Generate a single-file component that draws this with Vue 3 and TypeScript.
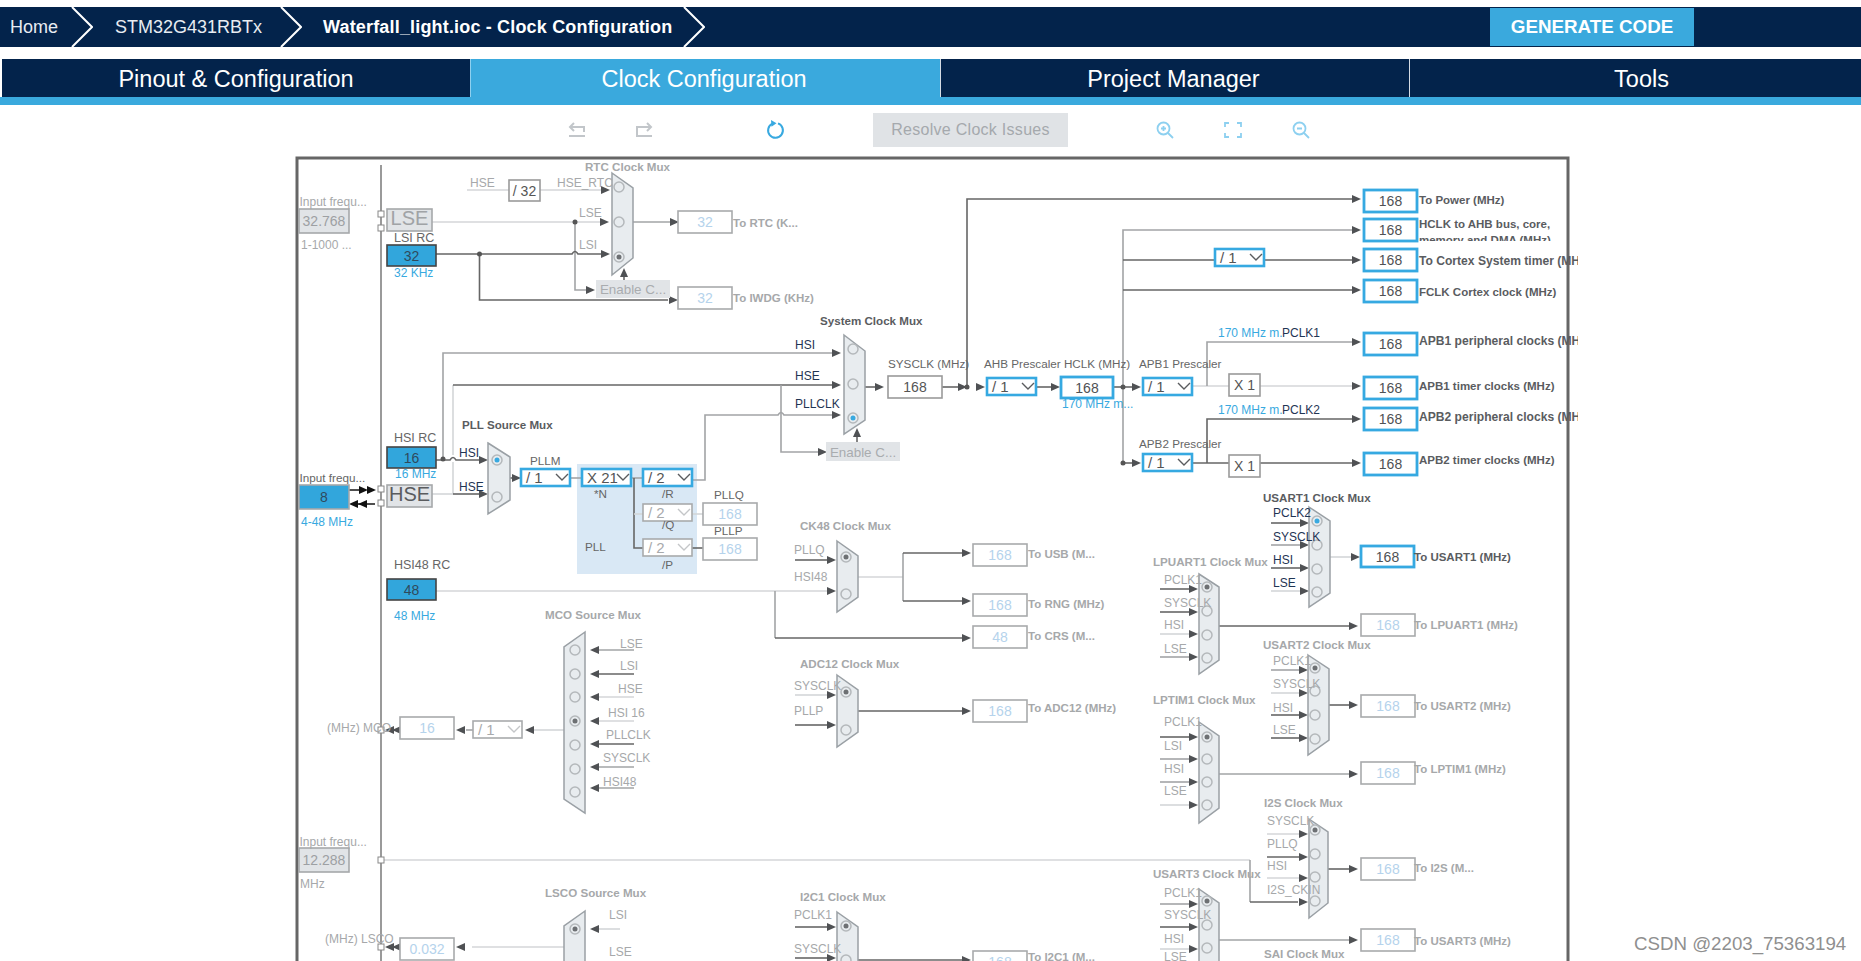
<template>
  <div class="page">
    <div class="crumbs">
      <div class="crumb home">Home</div>
      <svg class="chev" width="22" height="40" viewBox="0 0 22 40"><path d="M1 0 L21 20 L1 40" /></svg>
      <div class="crumb part">STM32G431RBTx</div>
      <svg class="chev" width="22" height="40" viewBox="0 0 22 40"><path d="M1 0 L21 20 L1 40" /></svg>
      <div class="crumb file">Waterfall_light.ioc - Clock Configuration</div>
      <svg class="chev" width="22" height="40" viewBox="0 0 22 40"><path d="M1 0 L21 20 L1 40" /></svg>
      <button class="generate">GENERATE CODE</button>
    </div>

    <div class="tabs">
      <div v-for="t in tabs" :key="t.name" class="tab" :class="{ active: t.active }">{{ t.name }}</div>
    </div>

    <div class="toolbar">
      <svg class="ic undo" width="18" height="16" viewBox="0 0 18 16"><path d="M6 1 L2 5 L6 9 M2 5 H16 V10 M1 14 H17" /></svg>
      <svg class="ic redo" width="18" height="16" viewBox="0 0 18 16"><path d="M12 1 L16 5 L12 9 M16 5 H2 V14 H17" /></svg>
      <svg class="ic refresh" width="20" height="20" viewBox="0 0 20 20"><path d="M7.5 3.6 A7.4 7.4 0 1 0 13 3.4" /><path class="head" d="M6 0 L11.5 3.2 L6.5 6.8 Z" /></svg>
      <button class="resolve">Resolve Clock Issues</button>
      <svg class="ic zoom zin" width="18" height="18" viewBox="0 0 18 18"><circle cx="7.5" cy="7.5" r="6" /><path d="M12 12 L17 17 M5 7.5 H10 M7.5 5 V10" /></svg>
      <svg class="ic zoom full" width="18" height="16" viewBox="0 0 18 16"><path d="M1 5 V1 H5 M13 1 H17 V5 M17 11 V15 H13 M5 15 H1 V11" /></svg>
      <svg class="ic zoom zout" width="18" height="18" viewBox="0 0 18 18"><circle cx="7.5" cy="7.5" r="6" /><path d="M12 12 L17 17 M5 7.5 H10" /></svg>
    </div>

    <div class="canvas">
      <svg class="diagram" width="1578" height="811" viewBox="0 150 1578 811">
        <defs>
          <clipPath id="hclk-clip"><rect x="1418" y="220" width="160" height="21" /></clipPath>
        </defs>
        <rect x="297" y="158" width="1271" height="830" class="frame" />
        <line x1="381" y1="165" x2="381" y2="961" class="rail" />

        <rect x="577" y="464" width="120" height="110" class="pll-block" />

        <path v-for="(w, i) in wires" :key="'w' + i" :d="w.d" class="wire" :class="w.tone" />
        <polygon v-for="(a, i) in arrows" :key="'a' + i" :points="a" class="arrow" />
        <polygon v-for="(a, i) in blackArrows" :key="'k' + i" :points="a" class="arrow-black" />
        <circle v-for="(d, i) in dots" :key="'d' + i" :cx="d[0]" :cy="d[1]" r="2.5" class="dot" />

        <g v-for="(m, i) in muxes" :key="'m' + i">
          <polygon :points="m.pts" class="mux" />
          <g v-for="(r, j) in m.radios" :key="j">
            <circle :cx="m.x" :cy="r" r="5" class="radio" />
            <circle v-if="m.sel === j" :cx="m.x" :cy="r" r="2.5" :class="m.blue ? 'pick-blue' : 'pick'" />
          </g>
        </g>

        <g v-for="(p, i) in pins" :key="'p' + i">
          <rect :x="p[0] - 3" :y="p[1] - 3" width="6" height="6" class="pin" />
        </g>

        <g v-for="(b, i) in boxes" :key="'b' + i">
          <rect :x="b.x" :y="b.y" :width="b.w" :height="b.h" class="box" :class="b.kind" />
          <text :x="b.x + b.w / 2" :y="b.y + b.h / 2 + 5" text-anchor="middle" class="box-t" :class="b.kind + '-t'">{{ b.t }}</text>
        </g>

        <g v-for="(d, i) in drops" :key="'s' + i">
          <rect :x="d.x" :y="d.y" width="49" height="17" class="box" :class="d.on ? 'sel' : 'sel-off'" />
          <text :x="d.x + 5" :y="d.y + 14" class="drop-t" :class="{ 'drop-off': !d.on }">{{ d.t }}</text>
          <path :d="`M${d.x + 35} ${d.y + 5} l6 6 l6 -6`" class="drop-c" :class="{ 'drop-c-off': !d.on }" />
        </g>

        <text v-for="(l, i) in labels" :key="'l' + i" :x="l[0]" :y="l[1]" class="lb" :class="l[3]">{{ l[2] }}</text>

        <g clip-path="url(#hclk-clip)">
          <text x="1419" y="228" class="lb out">HCLK to AHB bus, core,</text>
          <text x="1419" y="244" class="lb out">memory and DMA (MHz)</text>
        </g>
      </svg>
      <div class="mark">CSDN @2203_75363194</div>
    </div>
  </div>
</template>

<script setup lang="ts">
type Box = { x: number; y: number; w: number; h: number; t: string; kind: string }
type Drop = { x: number; y: number; t: string; on: boolean }
type Wire = { d: string; tone: string }
type Mux = { pts: string; x: number; radios: number[]; sel: number; blue?: boolean }

const tabs = [
  { name: 'Pinout & Configuration', active: false },
  { name: 'Clock Configuration', active: true },
  { name: 'Project Manager', active: false },
  { name: 'Tools', active: false },
]

// arrow tip at x,y
function ar(x: number, y: number, dir = 'r'): string {
  if (dir === 'r') return `${x},${y} ${x - 9},${y - 4} ${x - 9},${y + 4}`
  if (dir === 'l') return `${x},${y} ${x + 9},${y - 4} ${x + 9},${y + 4}`
  return `${x},${y} ${x - 4},${y + 9} ${x + 4},${y + 9}`
}

function w(d: string, tone = 'mid'): Wire {
  return { d, tone }
}

// all of the output boxes with the same width
const out = (y: number, t = '168'): Box => ({ x: 1364, y, w: 53, h: 22, t, kind: 'blue' })
const off = (x: number, y: number, t = '168'): Box => ({ x, y, w: 54, h: 22, t, kind: 'off' })
const rc = (y: number, t: string): Box => ({ x: 387, y, w: 49, h: 21, t, kind: 'rc' })

const boxes: Box[] = [
  { x: 299, y: 209, w: 50, h: 24, t: '32.768', kind: 'grey' },
  { x: 387, y: 209, w: 45, h: 22, t: 'LSE', kind: 'grey-big' },
  rc(245, '32'),
  { x: 509, y: 180, w: 31, h: 21, t: '/ 32', kind: 'plain' },
  off(678, 211, '32'),
  off(678, 287, '32'),
  { x: 596, y: 280, w: 74, h: 18, t: 'Enable C...', kind: 'fill' },
  { x: 826, y: 442, w: 74, h: 19, t: 'Enable C...', kind: 'fill' },
  rc(447, '16'),
  { x: 299, y: 485, w: 50, h: 24, t: '8', kind: 'rc-in' },
  { x: 387, y: 485, w: 45, h: 22, t: 'HSE', kind: 'dark-big' },
  rc(579, '48'),
  { x: 888, y: 376, w: 54, h: 22, t: '168', kind: 'plain' },
  { x: 1061, y: 377, w: 52, h: 21, t: '168', kind: 'blue' },
  { x: 1229, y: 374, w: 31, h: 22, t: 'X 1', kind: 'plain' },
  { x: 1229, y: 455, w: 31, h: 22, t: 'X 1', kind: 'plain' },
  out(190), out(219), out(249), out(280), out(333), out(377), out(408), out(453),
  off(703, 503), off(703, 538),
  off(973, 544), off(973, 594), off(973, 626, '48'), off(973, 700),
  { x: 1361, y: 546, w: 53, h: 21, t: '168', kind: 'blue' },
  off(1361, 614), off(1361, 695), off(1361, 762), off(1361, 858), off(1361, 929),
  off(400, 717, '16'),
  { x: 299, y: 848, w: 50, h: 24, t: '12.288', kind: 'grey' },
  off(400, 938, '0.032'),
  off(973, 951),
]

const drops: Drop[] = [
  { x: 987, y: 378, t: '/ 1', on: true },
  { x: 1143, y: 378, t: '/ 1', on: true },
  { x: 1143, y: 454, t: '/ 1', on: true },
  { x: 1215, y: 249, t: '/ 1', on: true },
  { x: 521, y: 469, t: '/ 1', on: true },
  { x: 582, y: 469, t: 'X 21', on: true },
  { x: 643, y: 469, t: '/ 2', on: true },
  { x: 643, y: 504, t: '/ 2', on: false },
  { x: 643, y: 539, t: '/ 2', on: false },
  { x: 473, y: 721, t: '/ 1', on: false },
]

const wires: Wire[] = [
  // RTC
  w('M467 190 H509', 'light'), w('M540 190 H602', 'light'),
  w('M432 222 H602', 'light'), w('M575 222 V290 H586', 'mid'),
  w('M436 254 H572 q3 -5 6 0 H602', 'dark'), w('M479.5 254 V300 H668', 'dark'),
  w('M633 222 H670', 'mid'), w('M624 280 V274', 'dark'),
  // system clock
  w('M443 459 V353 H832', 'mid'), w('M453 494 V462', 'light'),
  w('M453 455 V385', 'light'), w('M453 385 H832', 'dark'), w('M781 385 V452 H818', 'mid'),
  w('M692 480 H705 V415 H778 q3 -5 6 0 H832', 'mid'),
  w('M857 442 V436', 'dark'),
  w('M865 387 H876', 'dark'), w('M942 387 H958', 'dark'),
  w('M967 387 V199 H1352', 'dark'),
  w('M1036 387 H1052', 'dark'),
  w('M1113 387 H1132', 'dark'),
  w('M1123 463 V230 H1352', 'mid'),
  w('M1123 260 H1215', 'dark'), w('M1264 260 H1352', 'dark'),
  w('M1123 290 H1352', 'dark'),
  w('M1192 386 H1229', 'light'), w('M1207 386 V342 H1352', 'mid'), w('M1260 386 H1352', 'light'),
  w('M1123 463 H1132', 'dark'), w('M1192 463 H1229', 'dark'), w('M1207 463 V419 H1352', 'dark'),
  w('M1260 463 H1352', 'dark'),
  // pll
  w('M436 460 H450 q3 -5 6 0 H480', 'dark'), w('M432 494 H453', 'light'), w('M453 494 H480', 'dark'),
  w('M349 490 H364', 'black'), w('M358 504 H375', 'black'),
  w('M510 478 H512', 'dark'), w('M569 478 H582', 'mid'),
  w('M631 478 H643', 'mid'), w('M634 478 V548 H643', 'dark'), w('M634 514 H643', 'light'),
  w('M692 514 H703', 'light'), w('M692 548 H703', 'dark'),
  // 48 MHz and CK48
  w('M436 591 H827', 'light'), w('M775 591 V638', 'mid'), w('M775 638 H962', 'dark'),
  w('M795 560 H827', 'dark'), w('M858 577 H903', 'light'), w('M903 553 V601', 'mid'),
  w('M903 553 H962', 'dark'), w('M903 601 H962', 'dark'),
  // ADC12
  w('M795 695 H827', 'light'), w('M795 725 H827', 'dark'), w('M858 711 H962', 'dark'),
  // I2C1
  w('M795 927 H827', 'dark'), w('M795 958 H827', 'dark'), w('M858 960 H962', 'dark'),
  // MCO
  w('M599 650 H634', 'mid'), w('M599 674 H634', 'dark'), w('M599 697 H634', 'light'),
  w('M599 721 H634', 'light'), w('M599 744 H634', 'dark'), w('M599 767 H634', 'mid'),
  w('M599 788 H634', 'mid'),
  w('M534 730 H564', 'light'), w('M466 730 H473', 'mid'), w('M396 730 H400', 'dark'),
  // 12.288 MHz
  w('M384 860 H1250', 'light'), w('M1250 860 V902', 'mid'), w('M1250 902 H1298', 'dark'),
  // LSCO
  w('M599 929 H620', 'light'), w('M472 947 H564', 'light'), w('M396 947 H400', 'dark'),
  // USART1
  w('M1271 523 H1300', 'dark'), w('M1271 545 H1300', 'mid'), w('M1271 568 H1300', 'dark'),
  w('M1271 591 H1300', 'light'), w('M1330 557 H1352', 'light'),
  // LPUART1
  w('M1160 589 H1190', 'dark'), w('M1160 612 H1190', 'dark'), w('M1160 634 H1190', 'light'),
  w('M1160 657 H1190', 'mid'), w('M1219 626 H1350', 'dark'),
  // USART2
  w('M1271 670 H1300', 'mid'), w('M1271 693 H1300', 'light'), w('M1271 715 H1300', 'dark'),
  w('M1271 738 H1300', 'dark'), w('M1329 705 H1350', 'dark'),
  // LPTIM1
  w('M1160 737 H1190', 'dark'), w('M1160 759 H1190', 'mid'), w('M1160 782 H1190', 'mid'),
  w('M1160 805 H1190', 'light'), w('M1219 774 H1350', 'mid'),
  // I2S
  w('M1267 834 H1300', 'light'), w('M1267 857 H1300', 'dark'), w('M1267 878 H1300', 'light'),
  w('M1328 869 H1350', 'dark'),
  // USART3
  w('M1160 904 H1190', 'mid'), w('M1160 927 H1190', 'dark'), w('M1160 949 H1190', 'light'),
  w('M1219 940 H1350', 'mid'),
]

const arrows: string[] = [
  ar(610, 190), ar(609, 222), ar(610, 254), ar(595, 290), ar(678, 300), ar(679, 222),
  ar(624, 268, 'u'),
  ar(841, 353), ar(841, 385), ar(827, 452), ar(841, 415), ar(857, 428, 'u'), ar(884, 387),
  ar(967, 387), ar(985, 387), ar(1060, 387), ar(1141, 387), ar(1141, 463),
  ar(1361, 199), ar(1361, 230), ar(1361, 260), ar(1361, 290), ar(1361, 342), ar(1361, 386),
  ar(1361, 419), ar(1361, 463),
  ar(488, 460), ar(488, 494), ar(521, 478),
  ar(836, 560), ar(836, 591), ar(971, 553), ar(971, 601), ar(971, 638),
  ar(836, 695), ar(836, 725), ar(971, 711), ar(836, 927), ar(836, 958), ar(971, 960),
  ar(590, 650, 'l'), ar(590, 674, 'l'), ar(590, 697, 'l'), ar(590, 721, 'l'), ar(590, 744, 'l'),
  ar(590, 767, 'l'), ar(590, 788, 'l'),
  ar(525, 730, 'l'), ar(456, 730, 'l'), ar(385, 730, 'l'), ar(392, 730, 'l'),
  ar(590, 929, 'l'), ar(456, 947, 'l'), ar(385, 947, 'l'), ar(392, 947, 'l'),
  ar(1309, 523), ar(1309, 545), ar(1309, 568), ar(1309, 591), ar(1360, 557),
  ar(1198, 589), ar(1198, 612), ar(1198, 634), ar(1198, 657), ar(1358, 626),
  ar(1308, 670), ar(1308, 693), ar(1308, 715), ar(1308, 738), ar(1358, 705),
  ar(1198, 737), ar(1198, 759), ar(1198, 782), ar(1198, 805), ar(1358, 774),
  ar(1308, 834), ar(1308, 857), ar(1308, 878), ar(1308, 902), ar(1358, 869),
  ar(1198, 904), ar(1198, 927), ar(1198, 949), ar(1358, 940),
]

// the doubled heads on the HSE oscillator pins
const blackArrows: string[] = [
  ar(368, 490), ar(376, 490), ar(349, 504, 'l'), ar(358, 504, 'l'),
]

const dots: number[][] = [
  [575, 222], [479.5, 254], [443, 459], [967, 387], [1123, 387], [1123, 463],
]

const pins: number[][] = [
  [381, 214], [381, 228], [381, 489], [381, 503], [381, 730], [381, 860], [381, 947],
]

const muxes: Mux[] = [
  { pts: '612,173 633,188 633,258 612,275', x: 619, radios: [187, 222, 257], sel: 2 },
  { pts: '844,335 865,351 865,420 844,434', x: 853, radios: [349, 384, 418], sel: 2, blue: true },
  { pts: '488,443 510,457 510,500 488,514', x: 497, radios: [460, 497], sel: 0, blue: true },
  { pts: '837,541 858,556 858,597 837,612', x: 846, radios: [557, 594], sel: 0 },
  { pts: '837,675 858,690 858,732 837,747', x: 846, radios: [692, 730], sel: 0 },
  { pts: '585,632 564,647 564,799 585,813', x: 575, radios: [650, 674, 697, 721, 745, 769, 792], sel: 3 },
  { pts: '585,911 564,926 564,990 585,990', x: 575, radios: [929], sel: 0 },
  { pts: '837,912 858,927 858,990 837,990', x: 846, radios: [926, 960], sel: 0 },
  { pts: '1309,507 1330,521 1330,593 1309,607', x: 1317, radios: [521, 545, 569, 592], sel: 0, blue: true },
  { pts: '1199,574 1219,587 1219,660 1199,674', x: 1207, radios: [587, 611, 635, 658], sel: 0 },
  { pts: '1308,655 1329,669 1329,740 1308,755', x: 1315, radios: [668, 691, 715, 739], sel: 0 },
  { pts: '1199,722 1219,736 1219,808 1199,823', x: 1207, radios: [737, 759, 782, 805], sel: 0 },
  { pts: '1309,819 1328,832 1328,903 1309,918', x: 1315, radios: [830, 854, 877, 901], sel: 0 },
  { pts: '1199,889 1219,903 1219,990 1199,990', x: 1207, radios: [901, 925, 948], sel: 0 },
]

// x, baseline, text, class
const labels: [number, number, string, string][] = [
  [299.5, 206, 'Input frequ...', 'g'], [301, 249, '1-1000 ...', 'g'],
  [394, 242, 'LSI RC', 'm big'], [394, 277, '32 KHz', 'b'],
  [470, 187, 'HSE', 'g'], [557, 187, 'HSE_RTC', 'g'],
  [579, 217, 'LSE', 'g'], [579, 249, 'LSI', 'g'],
  [585, 171, 'RTC Clock Mux', 'tg'],
  [733, 227, 'To RTC (K...', 'outg'], [733, 302, 'To IWDG (KHz)', 'outg'],
  [820, 325, 'System Clock Mux', 'td'],
  [795, 349, 'HSI', 'dk'], [795, 380, 'HSE', 'dk'], [795, 408, 'PLLCLK', 'dk'],
  [888, 368, 'SYSCLK (MHz)', 'm'], [984, 368, 'AHB Prescaler HCLK (MHz)', 'm'],
  [1139, 368, 'APB1 Prescaler', 'm'], [1139, 448, 'APB2 Prescaler', 'm'],
  [1062, 408, '170 MHz m...', 'b'],
  [1218, 337, '170 MHz m.', 'b'], [1282, 337, 'PCLK1', 'dk'],
  [1218, 414, '170 MHz m.', 'b'], [1282, 414, 'PCLK2', 'dk'],
  [1419, 204, 'To Power (MHz)', 'out'], [1419, 265, 'To Cortex System timer (MHz)', 'out wide'],
  [1419, 296, 'FCLK Cortex clock (MHz)', 'out'], [1419, 345, 'APB1 peripheral clocks (MHz)', 'out wide'],
  [1419, 390, 'APB1 timer clocks (MHz)', 'out'], [1419, 421, 'APB2 peripheral clocks (MHz)', 'out wide'],
  [1419, 464, 'APB2 timer clocks (MHz)', 'out'],
  [462, 429, 'PLL Source Mux', 'td'],
  [394, 442, 'HSI RC', 'm big'], [395, 478, '16 MHz', 'b'],
  [459, 457, 'HSI', 'dk'], [459, 491, 'HSE', 'dk'],
  [299.5, 482, 'Input frequ...', 'm'], [301, 526, '4-48 MHz', 'b'],
  [530, 465, 'PLLM', 'm'], [594, 498, '*N', 'm'], [662, 498, '/R', 'm'],
  [662, 529, '/Q', 'm'], [662, 569, '/P', 'm'], [714, 499, 'PLLQ', 'm'], [714, 535, 'PLLP', 'm'],
  [585, 551, 'PLL', 'm'],
  [394, 569, 'HSI48 RC', 'm big'], [394, 620, '48 MHz', 'b'],
  [800, 530, 'CK48 Clock Mux', 'tg'], [794, 554, 'PLLQ', 'g'], [794, 581, 'HSI48', 'g'],
  [1028, 558, 'To USB (M...', 'outg'], [1028, 608, 'To RNG (MHz)', 'outg'], [1028, 640, 'To CRS (M...', 'outg'],
  [800, 668, 'ADC12 Clock Mux', 'tg'], [794, 690, 'SYSCLK', 'g'], [794, 715, 'PLLP', 'g'],
  [1028, 712, 'To ADC12 (MHz)', 'outg'],
  [545, 619, 'MCO Source Mux', 'tg'],
  [620, 648, 'LSE', 'g'], [620, 670, 'LSI', 'g'], [618, 693, 'HSE', 'g'], [608, 717, 'HSI 16', 'g'],
  [606, 739, 'PLLCLK', 'g'], [603, 762, 'SYSCLK', 'g'], [603, 786, 'HSI48', 'g'],
  [327, 732, '(MHz) MCO', 'g'],
  [299.5, 846, 'Input frequ...', 'g'], [300, 888, 'MHz', 'g'],
  [545, 897, 'LSCO Source Mux', 'tg'], [609, 919, 'LSI', 'g'], [609, 956, 'LSE', 'g'],
  [325, 943, '(MHz) LSCO', 'g'],
  [800, 901, 'I2C1 Clock Mux', 'tg'], [794, 919, 'PCLK1', 'g'], [794, 953, 'SYSCLK', 'g'],
  [1028, 961, 'To I2C1 (M...', 'outg'],
  [1263, 502, 'USART1 Clock Mux', 'td'],
  [1273, 517, 'PCLK2', 'dk'], [1273, 541, 'SYSCLK', 'dk'], [1273, 564, 'HSI', 'dk'], [1273, 587, 'LSE', 'dk'],
  [1414, 561, 'To USART1 (MHz)', 'out'],
  [1153, 566, 'LPUART1 Clock Mux', 'tg'],
  [1164, 584, 'PCLK1', 'g'], [1164, 607, 'SYSCLK', 'g'], [1164, 629, 'HSI', 'g'], [1164, 653, 'LSE', 'g'],
  [1414, 629, 'To LPUART1 (MHz)', 'outg'],
  [1263, 649, 'USART2 Clock Mux', 'tg'],
  [1273, 665, 'PCLK1', 'g'], [1273, 688, 'SYSCLK', 'g'], [1273, 712, 'HSI', 'g'], [1273, 734, 'LSE', 'g'],
  [1414, 710, 'To USART2 (MHz)', 'outg'],
  [1153, 704, 'LPTIM1 Clock Mux', 'tg'],
  [1164, 726, 'PCLK1', 'g'], [1164, 750, 'LSI', 'g'], [1164, 773, 'HSI', 'g'], [1164, 795, 'LSE', 'g'],
  [1414, 773, 'To LPTIM1 (MHz)', 'outg'],
  [1264, 807, 'I2S Clock Mux', 'tg'],
  [1267, 825, 'SYSCLK', 'g'], [1267, 848, 'PLLQ', 'g'], [1267, 870, 'HSI', 'g'], [1267, 894, 'I2S_CKIN', 'g'],
  [1414, 872, 'To I2S (M...', 'outg'],
  [1153, 878, 'USART3 Clock Mux', 'tg'],
  [1164, 897, 'PCLK1', 'g'], [1164, 919, 'SYSCLK', 'g'], [1164, 943, 'HSI', 'g'], [1164, 961, 'LSE', 'g'],
  [1414, 945, 'To USART3 (MHz)', 'outg'],
  [1264, 958, 'SAI Clock Mux', 'tg'],
]
</script>

<style>
html, body { margin: 0; background: #fff; overflow: hidden; }
</style>

<style scoped>
.page {
  height: 961px;
  overflow: hidden;
  display: flex;
  flex-direction: column;
  padding-top: 7px;
  box-sizing: border-box;
  font-family: "Liberation Sans", Arial, sans-serif;
}
.crumbs {
  height: 40px;
  flex: none;
  background: #03234b;
  display: flex;
  align-items: center;
  color: #e8ecf2;
  font-size: 18px;
}
.crumb { white-space: nowrap; flex: none; }
.home { margin-left: 10px; width: 61px; }
.part { margin-left: 22px; width: 165px; }
.file { margin-left: 21px; width: 360px; color: #fff; font-weight: 700; letter-spacing: 0.17px; }
.chev { flex: none; }
.chev path { fill: none; stroke: #fff; stroke-width: 2; }
.generate {
  margin-left: 785px;
  width: 204px;
  height: 38px;
  flex: none;
  border: 0;
  background: #3aa9dd;
  color: #fff;
  font: 700 18.8px "Liberation Sans", Arial, sans-serif;
}
.tabs {
  margin-top: 12px;
  flex: none;
  display: grid;
  grid-template-columns: 468px 470px 469px 1fr;
  padding-left: 2px;
  border-bottom: 8px solid #3aa9dd;
}
.tab {
  height: 38px;
  background: #03234b;
  color: #fff;
  font-size: 23.5px;
  line-height: 41px;
  text-align: center;
  border-left: 1px solid #d5dbe3;
  box-sizing: border-box;
}
.tab:first-child { border-left: 0; }
.tab:nth-child(2), .tab:nth-child(3) { padding-right: 3px; }
.tab:last-child { padding-left: 12px; }
.tab.active { background: #3aa9dd; border-left-color: #8ed0ef; }
.toolbar {
  flex: none;
  height: 45px;
  padding-top: 5px;
  box-sizing: border-box;
  display: flex;
  align-items: center;
}
.ic { flex: none; fill: none; stroke-width: 2; }
.undo, .redo { stroke: #c2c6ca; }
.undo { margin-left: 568px; }
.redo { margin-left: 49px; }
.refresh { margin-left: 112px; stroke: #38a9e0; }
.refresh .head { fill: #38a9e0; stroke: none; }
.resolve {
  margin-left: 88px;
  width: 195px;
  height: 34px;
  flex: none;
  border: 0;
  background: #e0e3e6;
  color: #a5a9ad;
  font: 16px "Liberation Sans", Arial, sans-serif;
  letter-spacing: 0.28px;
}
.zoom { stroke: #8dd0f0; stroke-width: 1.8; }
.zin { margin-left: 88px; }
.full { margin-left: 50px; }
.zout { margin-left: 50px; }

.canvas { position: relative; flex: 1; overflow: hidden; }
.diagram { display: block; }
.mark {
  position: absolute;
  left: 1634px;
  top: 783px;
  font-size: 18.7px;
  color: #8f8f8f;
  white-space: nowrap;
}

.frame { fill: #fff; stroke: #666; stroke-width: 3; }
.rail { stroke: #9a9a9a; stroke-width: 2; }
.pll-block { fill: #d9e8f5; }
.wire { fill: none; stroke-width: 1.6; }
.wire.light { stroke: #d4d6d8; }
.wire.mid { stroke: #a2a4a6; }
.wire.dark { stroke: #666; }
.wire.black { stroke: #222; }
.arrow { fill: #4f5154; }
.arrow-black { fill: #111; }
.dot { fill: #555; }
.mux { fill: #e8ecef; stroke: #9aa0a5; stroke-width: 1.5; }
.radio { fill: none; stroke: #b4b8bb; stroke-width: 1.5; }
.pick { fill: #6d7073; }
.pick-blue { fill: #38a9e0; }
.pin { fill: #fff; stroke: #888; stroke-width: 1; }

.box { fill: #fff; stroke: #9a9a9a; stroke-width: 1.6; }
.box.blue { stroke: #36a9e1; stroke-width: 2.8; }
.box.off { stroke: #a8aaac; }
.box.plain { stroke: #9a9a9a; }
.box.grey, .box.grey-big, .box.dark-big { fill: #e1e4e7; stroke: #a6a8aa; }
.box.rc { fill: #32a6dc; stroke: #444; }
.box.rc-in { fill: #32a6dc; stroke: #a6a8aa; }
.box.fill { fill: #e1e4e7; stroke: none; }
.box.sel { stroke: #36a9e1; stroke-width: 2.6; }
.box.sel-off { stroke: #a8aaac; }

.box-t { font-size: 14px; fill: #555; }
.blue-t { fill: #4f5154; }
.off-t { fill: #b5d3ec; }
.plain-t { fill: #555; }
.grey-t { fill: #9da0a3; }
.grey-big-t { fill: #a0a3a6; font-size: 20px; }
.dark-big-t { fill: #5a5c5f; font-size: 20px; }
.rc-t, .rc-in-t { fill: #2f4a5c; }
.fill-t { fill: #a9acaf; font-size: 13.4px; }

.drop-t { font-size: 15px; fill: #555; }
.drop-off { fill: #a8aaac; }
.drop-c { fill: none; stroke: #5a5c5f; stroke-width: 1.4; }
.drop-c-off { stroke: #c4c6c8; }

.lb { font-size: 12px; }
.lb.g { fill: #a6a8aa; }
.lb.m { fill: #666; font-size: 11.7px; }
.lb.big { font-size: 12.5px; }
.lb.b { fill: #38a9e0; }
.lb.dk { fill: #1f3554; }
.lb.tg { fill: #a6a8aa; font-weight: 700; font-size: 11.6px; }
.lb.td { fill: #5a5c5f; font-weight: 700; font-size: 11.6px; }
.lb.out { fill: #5a5c5f; font-weight: 700; font-size: 11.5px; }
.lb.out.wide { font-size: 12.1px; }
.lb.outg { fill: #a6a8aa; font-weight: 700; font-size: 11.5px; }
</style>
